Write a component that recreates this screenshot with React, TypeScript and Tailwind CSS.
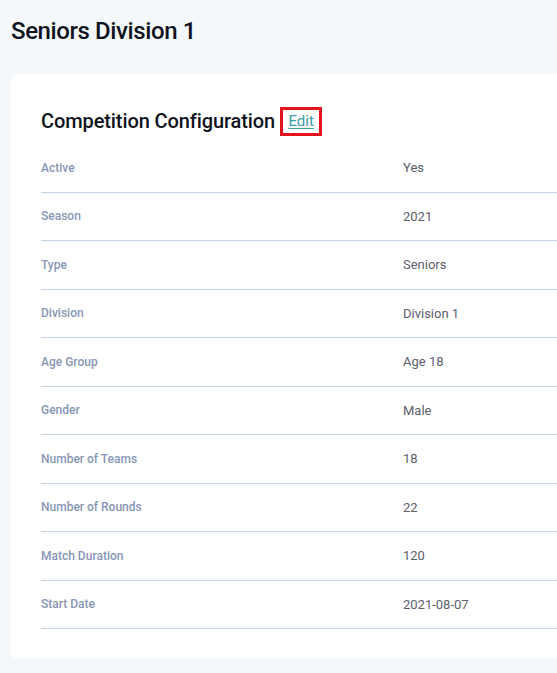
import React from 'react'

const rows: [string, string][] = [
  ['Active', 'Yes'],
  ['Season', '2021'],
  ['Type', 'Seniors'],
  ['Division', 'Division 1'],
  ['Age Group', 'Age 18'],
  ['Gender', 'Male'],
  ['Number of Teams', '18'],
  ['Number of Rounds', '22'],
  ['Match Duration', '120'],
  ['Start Date', '2021-08-07'],
]

export default function App() {
  return (
    <div className="min-h-screen w-[557px] overflow-hidden bg-[#f5f8fb] font-['Roboto',sans-serif]">
      <div className="pl-[11px] pt-[17px] pb-[15px]">
        <h1 className="text-[24px] leading-[28px] font-medium text-[#0f1320] tracking-[-0.4px]">
          Seniors Division 1
        </h1>
        {/* card */}
        <div className="mt-[29px] w-[700px] rounded-[6px] bg-white pl-[30px] pr-[30px] pt-[33px] pb-[30px]">
          <div className="flex items-center">
            <h2 className="text-[20px] leading-[29px] font-medium text-[#0f1320] tracking-[-0.1px]">
              Competition Configuration
            </h2>
            <div className="ml-[5px] h-[29px] w-[42px] border-[3px] border-[#e5131d] flex items-center justify-center">
              <a href="#" className="text-[15px] text-[#3a9ea5] underline underline-offset-2">
                Edit
              </a>
            </div>
          </div>
          <div className="mt-[8px]">
            {rows.map(([label, value]) => (
              <div key={label} className="flex h-[48.5px] items-center border-b border-[#c3d3e2]">
                <div className="w-[362px] text-[12px] font-medium text-[#8796b4]">{label}</div>
                <div className="text-[13px] text-[#5c606b]">{value}</div>
              </div>
            ))}
          </div>
        </div>
      </div>
    </div>
  )
}
